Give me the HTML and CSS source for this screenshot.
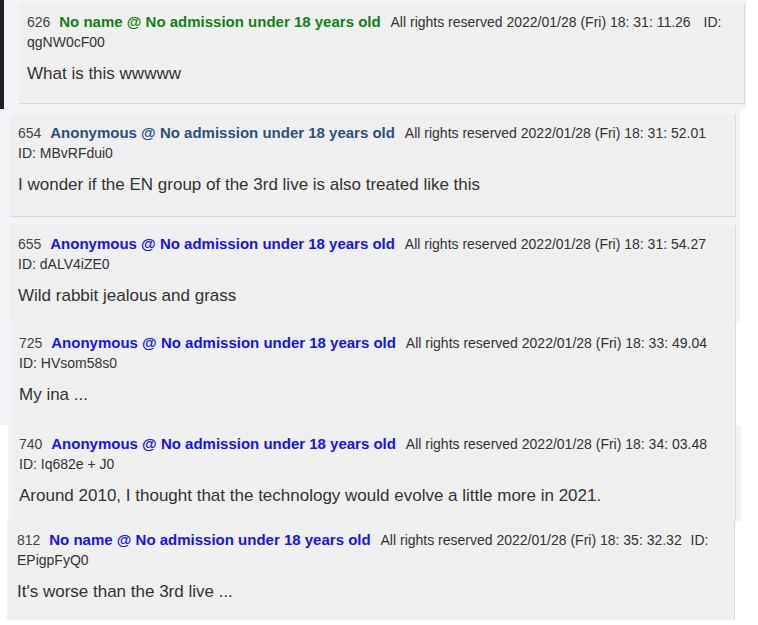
FILE: index.html
```html
<!DOCTYPE html>
<html lang="en">
<head>
    <meta charset="UTF-8">
    <meta name="viewport" content="width=device-width, initial-scale=1.0">
    <title>Thread</title>
    <link rel="stylesheet" href="styles.css">
</head>
<body>
    <!-- 626 -->
    <div class="seg seg-a">
        <div class="post post-626">
            <div class="post-head">
                <span class="num">626</span>
                <span class="name name-green">No name @ No admission under 18 years old</span>
                <span class="date date-wide">All rights reserved 2022/01/28 (Fri) 18: 31: 11.26</span>
                <span class="uid">ID:</span> <span class="uid">qgNW0cF00</span>
            </div>
            <p class="post-body">What is this wwwww</p>
        </div>
    </div>

    <!-- 654 / 655 -->
    <div class="seg seg-b">
        <div class="post post-654">
            <div class="post-head">
                <span class="num">654</span>
                <span class="name name-visited">Anonymous @ No admission under 18 years old</span>
                <span class="date">All rights reserved 2022/01/28 (Fri) 18: 31: 52.01</span>
                <span class="uid">ID: MBvRFdui0</span>
            </div>
            <p class="post-body">I wonder if the EN group of the 3rd live is also treated like this</p>
        </div>
        <div class="post post-655">
            <div class="post-head">
                <span class="num">655</span>
                <span class="name">Anonymous @ No admission under 18 years old</span>
                <span class="date">All rights reserved 2022/01/28 (Fri) 18: 31: 54.27</span>
                <span class="uid">ID: dALV4iZE0</span>
            </div>
            <p class="post-body">Wild rabbit jealous and grass</p>
        </div>
    </div>

    <!-- 725 -->
    <div class="seg seg-c">
        <div class="post post-725">
            <div class="post-head">
                <span class="num">725</span>
                <span class="name">Anonymous @ No admission under 18 years old</span>
                <span class="date">All rights reserved 2022/01/28 (Fri) 18: 33: 49.04</span>
                <span class="uid">ID: HVsom58s0</span>
            </div>
            <p class="post-body">My ina ...</p>
        </div>
    </div>

    <!-- 740 -->
    <div class="seg seg-d">
        <div class="post post-740">
            <div class="post-head">
                <span class="num">740</span>
                <span class="name">Anonymous @ No admission under 18 years old</span>
                <span class="date">All rights reserved 2022/01/28 (Fri) 18: 34: 03.48</span>
                <span class="uid">ID: Iq682e + J0</span>
            </div>
            <p class="post-body">Around 2010, I thought that the technology would evolve a little more in 2021.</p>
        </div>
    </div>

    <!-- 812 -->
    <div class="seg seg-e">
        <div class="post post-812">
            <div class="post-head">
                <span class="num">812</span>
                <span class="name">No name @ No admission under 18 years old</span>
                <span class="date">All rights reserved 2022/01/28 (Fri) 18: 35: 32.32</span>
                <span class="uid">ID:</span> <span class="uid">EPigpFyQ0</span>
            </div>
            <p class="post-body">It's worse than the 3rd live ...</p>
        </div>
    </div>
</body>
</html>
```

FILE: styles.css
```css
/* Base */
body, html {
    margin: 0;
    padding: 0;
    background-color: #fff;
    font-family: 'Liberation Sans', Arial, sans-serif;
    color: #333;
}

/* Each strip is a piece of a different screenshot */
.seg {
    box-sizing: border-box;
    background-color: #f2f3f7;
}

.seg-a {
    width: 746px;
    border-left: 4px solid #1e1e1e;
    padding: 3px 0 5px 15px;
}

.seg-b {
    width: 740px;
    padding: 5px 0 0 10px;
}

.seg-c {
    width: 736px;
    padding: 1px 0 0 11px;
}

.seg-d {
    width: 733px;
    margin-left: 8px;
    padding-left: 3px;
}

.seg-e {
    width: 735px;
    margin-left: 7px;
    background-color: transparent;
}

/* Post card */
.post {
    box-sizing: border-box;
    background-color: #efefef;
    border-right: 1px solid #dadada;
    padding: 9px 8px 19px 8px;
}

.post-626 {
    width: 726px;
    border-bottom: 1px solid #dadada;
    padding-bottom: 18px;
}

.post-654 {
    width: 726px;
    border-bottom: 1px solid #dadada;
    padding-bottom: 20px;
    margin-bottom: 8px;
}

.post-655 {
    width: 726px;
    padding-bottom: 16px;
}

.post-725 {
    width: 725px;
    padding-bottom: 19px;
}

.post-740 {
    width: 725px;
    padding-bottom: 14px;
}

.post-812 {
    width: 728px;
    padding: 9px 10px 17px 10px;
}

.post-head {
    font-size: 14px;
    line-height: 20px;
}

.num {
    color: #444;
}

.name {
    margin-left: 5px;
    font-size: 15px;
    font-weight: bold;
    color: #1414ee;
}

.name-green {
    color: #118018;
}

.name-visited {
    color: #2c4f7c;
}

.date {
    margin-left: 6px;
    margin-right: 5px;
}

.date-wide {
    margin-right: 9px;
}

.post-body {
    margin: 11px 0 0 0;
    font-size: 17px;
    line-height: 22px;
}
```
